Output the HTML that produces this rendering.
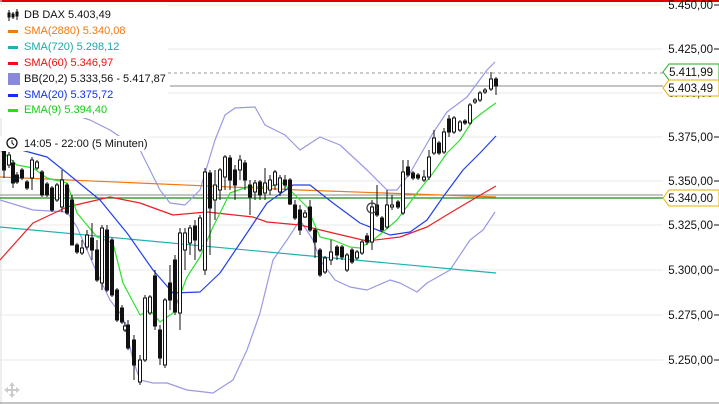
<!DOCTYPE html>
<html><head><meta charset="utf-8"><style>
body{margin:0;width:719px;height:404px;overflow:hidden;background:#fff;font-family:"Liberation Sans",sans-serif}
svg{position:absolute;left:0;top:0}
.lg{position:absolute;left:24px;font-size:11px;white-space:nowrap;line-height:14px}
.ax{font-size:11.5px;fill:#111;text-anchor:end;font-family:"Liberation Sans",sans-serif}
</style></head><body>
<svg width="719" height="404" viewBox="0 0 719 404">
<rect x="0" y="0" width="719" height="2" fill="#e00000"/>
<line x1="1" y1="0" x2="1" y2="404" stroke="#ddd"/>
<line x1="0" y1="403" x2="719" y2="403" stroke="#888"/>
<g stroke="#e8e8e8" stroke-width="1">
<line x1="0" y1="5" x2="663" y2="5"/><line x1="0" y1="49" x2="663" y2="49"/><line x1="0" y1="93" x2="663" y2="93"/><line x1="0" y1="137" x2="663" y2="137"/><line x1="0" y1="181" x2="663" y2="181"/><line x1="0" y1="225" x2="663" y2="225"/><line x1="0" y1="270" x2="663" y2="270"/><line x1="0" y1="315" x2="663" y2="315"/><line x1="0" y1="360" x2="663" y2="360"/>
</g>
<g class="ax">
<text class="ax" x="713" y="9">5.450,00</text><text class="ax" x="713" y="53">5.425,00</text><text class="ax" x="713" y="97">5.400,00</text><text class="ax" x="713" y="141">5.375,00</text><text class="ax" x="713" y="185">5.350,00</text><text class="ax" x="713" y="229">5.325,00</text><text class="ax" x="713" y="274">5.300,00</text><text class="ax" x="713" y="319">5.275,00</text><text class="ax" x="713" y="364">5.250,00</text>
</g>
<g stroke="#111"><line x1="714" y1="5" x2="719" y2="5"/><line x1="714" y1="49" x2="719" y2="49"/><line x1="714" y1="137" x2="719" y2="137"/><line x1="714" y1="181" x2="719" y2="181"/><line x1="714" y1="225" x2="719" y2="225"/><line x1="714" y1="270" x2="719" y2="270"/><line x1="714" y1="315" x2="719" y2="315"/><line x1="714" y1="360" x2="719" y2="360"/></g>
<line x1="0" y1="73" x2="663" y2="73" stroke="#999" stroke-dasharray="3,3"/>
<line x1="170" y1="86" x2="663" y2="86" stroke="#888"/>
<line x1="0" y1="195" x2="663" y2="195" stroke="#888"/>
<line x1="0" y1="198" x2="663" y2="198" stroke="#1a8a1a" stroke-width="1.3"/>
<g fill="none" stroke-width="1.2" stroke-linejoin="round">
<polyline stroke="#9999e6" points="0,100 40,95 60,110 90,120 110,130 140,150 160,190 170,203 185,205 200,190 215,140 225,115 235,108 255,107 265,125 285,135 300,150 320,137 340,145 367,170 387,190 397,190 410,173 433,133 447,112 467,97 487,70 495,62"/>
<polyline stroke="#9999e6" points="0,200 33,210 67,212 77,227 97,273 110,300 123,317 133,360 140,380 153,383 167,383 187,390 213,393 233,380 247,350 260,313 273,260 287,240 300,220 313,240 320,260 335,280 350,287 367,290 390,280 400,283 417,292 427,283 450,270 470,240 483,230 495,212"/>
<polyline stroke="#f07a10" points="0,177 300,190 496,197"/>
<polyline stroke="#20b0b0" points="0,227 300,255 496,273"/>
<polyline stroke="#ee2020" points="0,260 33,223 67,207 110,197 140,203 173,215 207,212 253,217 267,222 300,225 333,233 367,241 400,237 427,227 450,213 477,197 496,186"/>
<polyline stroke="#2040ee" points="0,140 10,147 47,157 67,173 100,200 127,233 153,270 173,293 200,292 220,273 247,233 267,203 293,185 310,185 333,203 360,223 390,235 410,232 427,220 443,197 463,170 480,153 496,136"/>
<polyline stroke="#30e030" points="0,150 17,165 33,168 47,178 67,183 77,213 97,237 113,243 123,283 140,315 150,310 160,322 173,313 187,277 200,257 213,227 230,193 247,187 267,187 283,183 297,197 307,207 320,237 333,240 350,247 360,248 373,240 383,232 397,220 417,193 433,173 447,153 460,140 473,120 490,107 496,103"/>
</g>
<g stroke="#111" stroke-width="1">
<path d="M4 145V178M9 152V168M13 160V188M17 172V184M22 168V180M27 180V190M32 157V190M37 160V170M42 170V197M47 182V197M52 186V212M57 183V202M62 170V212M67 183V215M72 195V245M77 243V254M82 240V255M87 230V250M92 223V260M97 240V282M102 225V290M107 225V292M112 238V297M117 288V322M122 305V324M125 322V332M128 320V350M134 335V380M140 355V385M145 295V362M150 295V315M155 270V330M160 325V365M165 298V368M170 265V310M175 255V315M180 228V330M185 228V270M190 225V255M195 220V260M200 215V252M205 168V275M210 170V255M215 170V220M220 168V200M225 155V190M230 155V190M235 165V200M240 155V180M245 160V190M250 180V215M255 180V200M260 180V200M265 168V200M270 175V195M275 170V190M280 175V196M285 175V190M290 178V205M295 200V220M300 205V235M305 210V218M310 200V232M315 228V258M320 248V277M325 256V274M331 240V265M337 245V260M342 245V260M347 253V272M352 248V264M357 250V260M362 240V255M367 233V245M372 200V250M377 185V217M382 216V232M387 190V229M392 195V210M398 200V209M403 160V215M408 160V177M413 171V180M418 173V180M424 170V182M429 150V180M434 130V155M439 141V155M444 128V154M449 115V137M454 116V134M460 120V132M465 119V125M470 103V125M475 98V104M480 91V102M485 88V94M491 72V91M496 77V95"/>
</g>
<g stroke="#111" fill="#111">
<rect x="2.5" y="150" width="3" height="20"/><rect x="11.5" y="163" width="3" height="20"/><rect x="15.5" y="175" width="3" height="7"/><rect x="20.5" y="170" width="3" height="8"/><rect x="25.5" y="182" width="3" height="6"/><rect x="40.5" y="172" width="3" height="23"/><rect x="45.5" y="184" width="3" height="11"/><rect x="50.5" y="188" width="3" height="22"/><rect x="65.5" y="185" width="3" height="28"/><rect x="70.5" y="200" width="3" height="45"/><rect x="75.5" y="245" width="3" height="7"/><rect x="90.5" y="238" width="3" height="12"/><rect x="95.5" y="250" width="3" height="30"/><rect x="105.5" y="230" width="3" height="60"/><rect x="110.5" y="240" width="3" height="55"/><rect x="115.5" y="290" width="3" height="30"/><rect x="120.5" y="308" width="3" height="14"/><rect x="126.5" y="325" width="3" height="23"/><rect x="132.5" y="340" width="3" height="25"/><rect x="153.5" y="276" width="3" height="50"/><rect x="158.5" y="330" width="3" height="28"/><rect x="168.5" y="283" width="3" height="17"/><rect x="173.5" y="260" width="3" height="52"/><rect x="193.5" y="226" width="3" height="14"/><rect x="208.5" y="173" width="3" height="35"/><rect x="228.5" y="158" width="3" height="22"/><rect x="233.5" y="170" width="3" height="15"/><rect x="243.5" y="163" width="3" height="17"/><rect x="248.5" y="185" width="3" height="12"/><rect x="258.5" y="182" width="3" height="13"/><rect x="283.5" y="180" width="3" height="5"/><rect x="288.5" y="180" width="3" height="24"/><rect x="293.5" y="205" width="3" height="13"/><rect x="298.5" y="210" width="3" height="20"/><rect x="308.5" y="207" width="3" height="23"/><rect x="313.5" y="230" width="3" height="12"/><rect x="318.5" y="250" width="3" height="25"/><rect x="335.5" y="247" width="3" height="8"/><rect x="340.5" y="247" width="3" height="10"/><rect x="350.5" y="250" width="3" height="12"/><rect x="365.5" y="236" width="3" height="6"/><rect x="375.5" y="205" width="3" height="10"/><rect x="380.5" y="218" width="3" height="12"/><rect x="396.5" y="202" width="3" height="5"/><rect x="406.5" y="167" width="3" height="8"/><rect x="411.5" y="173" width="3" height="5"/><rect x="416.5" y="175" width="3" height="3"/><rect x="437.5" y="143" width="3" height="10"/><rect x="447.5" y="119" width="3" height="13"/><rect x="463.5" y="121" width="3" height="2"/><rect x="494.5" y="79" width="3" height="7"/>
</g>
<g stroke="#111" fill="#fff">
<rect x="7.5" y="155" width="3" height="10"/><rect x="30.5" y="160" width="3" height="18"/><rect x="35.5" y="162" width="3" height="6"/><rect x="55.5" y="185" width="3" height="15"/><rect x="60.5" y="180" width="3" height="27"/><rect x="80.5" y="248" width="3" height="5"/><rect x="85.5" y="235" width="3" height="12"/><rect x="100.5" y="228" width="3" height="55"/><rect x="123.5" y="326" width="3" height="4"/><rect x="138.5" y="360" width="3" height="22"/><rect x="143.5" y="298" width="3" height="62"/><rect x="148.5" y="297" width="3" height="16"/><rect x="163.5" y="300" width="3" height="65"/><rect x="178.5" y="233" width="3" height="80"/><rect x="183.5" y="233" width="3" height="17"/><rect x="188.5" y="228" width="3" height="15"/><rect x="198.5" y="218" width="3" height="32"/><rect x="203.5" y="172" width="3" height="98"/><rect x="213.5" y="185" width="3" height="15"/><rect x="218.5" y="170" width="3" height="20"/><rect x="223.5" y="157" width="3" height="20"/><rect x="238.5" y="160" width="3" height="10"/><rect x="253.5" y="183" width="3" height="9"/><rect x="263.5" y="183" width="3" height="10"/><rect x="268.5" y="180" width="3" height="10"/><rect x="273.5" y="172" width="3" height="13"/><rect x="278.5" y="178" width="3" height="14"/><rect x="303.5" y="213" width="3" height="4"/><rect x="323.5" y="258" width="3" height="14"/><rect x="329.5" y="252" width="3" height="8"/><rect x="345.5" y="255" width="3" height="15"/><rect x="355.5" y="252" width="3" height="6"/><rect x="360.5" y="242" width="3" height="11"/><rect x="370.5" y="207" width="3" height="35"/><rect x="385.5" y="205" width="3" height="22"/><rect x="390.5" y="205" width="3" height="2"/><rect x="401.5" y="172" width="3" height="41"/><rect x="422.5" y="177" width="3" height="3"/><rect x="427.5" y="157" width="3" height="20"/><rect x="432.5" y="138" width="3" height="15"/><rect x="442.5" y="132" width="3" height="20"/><rect x="452.5" y="118" width="3" height="14"/><rect x="458.5" y="122" width="3" height="8"/><rect x="468.5" y="105" width="3" height="18"/><rect x="473.5" y="100" width="3" height="2"/><rect x="478.5" y="93" width="3" height="7"/><rect x="483.5" y="90" width="3" height="2"/><rect x="489.5" y="79" width="3" height="10"/>
</g>
<circle cx="372" cy="208" r="5" fill="none" stroke="#444" stroke-width="1.3"/>
<rect x="0" y="5" width="168" height="113" fill="#fff"/>
<rect x="0" y="136" width="148" height="15" fill="#fff"/>
<path d="M669 64H719V80H669L663 72Z" fill="#fff" stroke="#22aa22"/>
<path d="M669 80H719V96H669L663 88Z" fill="#fff" stroke="#e8b000"/>
<path d="M669 190H719V206H669L663 198Z" fill="#fff" stroke="#e8b000"/>
<text class="ax" x="713" y="76">5.411,99</text>
<text class="ax" x="713" y="92">5.403,49</text>
<text class="ax" x="713" y="202">5.340,00</text>
<g stroke="#111" stroke-width="1"><path d="M9 10V21M13 12V19M17 9V20"/><rect x="8" y="13" width="2" height="4" fill="#111"/><rect x="12" y="14" width="2" height="3" fill="#111"/><rect x="16" y="12" width="2" height="4" fill="#111"/></g>
<rect x="8" y="30" width="10" height="3" fill="#f07a10"/>
<rect x="8" y="46" width="10" height="3" fill="#20b0b0"/>
<rect x="8" y="62" width="10" height="3" fill="#ee1010"/>
<rect x="8" y="73" width="12" height="12" fill="#8888dd"/>
<rect x="8" y="94" width="10" height="3" fill="#1030ee"/>
<rect x="8" y="109" width="10" height="3" fill="#20e020"/>
<circle cx="12" cy="143" r="5" fill="none" stroke="#111" stroke-width="1.3"/><path d="M12 140V143L14 145" stroke="#111" fill="none"/>
<g fill="#ccc"><path d="M12 382L15 386H9ZM12 398L15 394H9ZM4 390L8 387V393ZM20 390L16 387V393Z"/><rect x="11" y="385" width="2" height="10"/><rect x="7" y="389" width="10" height="2"/></g>
</svg>
<div class="lg" style="top:8px;color:#111">DB DAX 5.403,49</div>
<div class="lg" style="top:24px;color:#f07a10">SMA(2880) 5.340,08</div>
<div class="lg" style="top:40px;color:#20a8a8">SMA(720) 5.298,12</div>
<div class="lg" style="top:56px;color:#ee1010">SMA(60) 5.346,97</div>
<div class="lg" style="top:72px;color:#111">BB(20,2) 5.333,56 - 5.417,87</div>
<div class="lg" style="top:88px;color:#1030ee">SMA(20) 5.375,72</div>
<div class="lg" style="top:103px;color:#10d010">EMA(9) 5.394,40</div>
<div class="lg" style="top:137px;color:#111">14:05 - 22:00 (5 Minuten)</div>
</body></html>
